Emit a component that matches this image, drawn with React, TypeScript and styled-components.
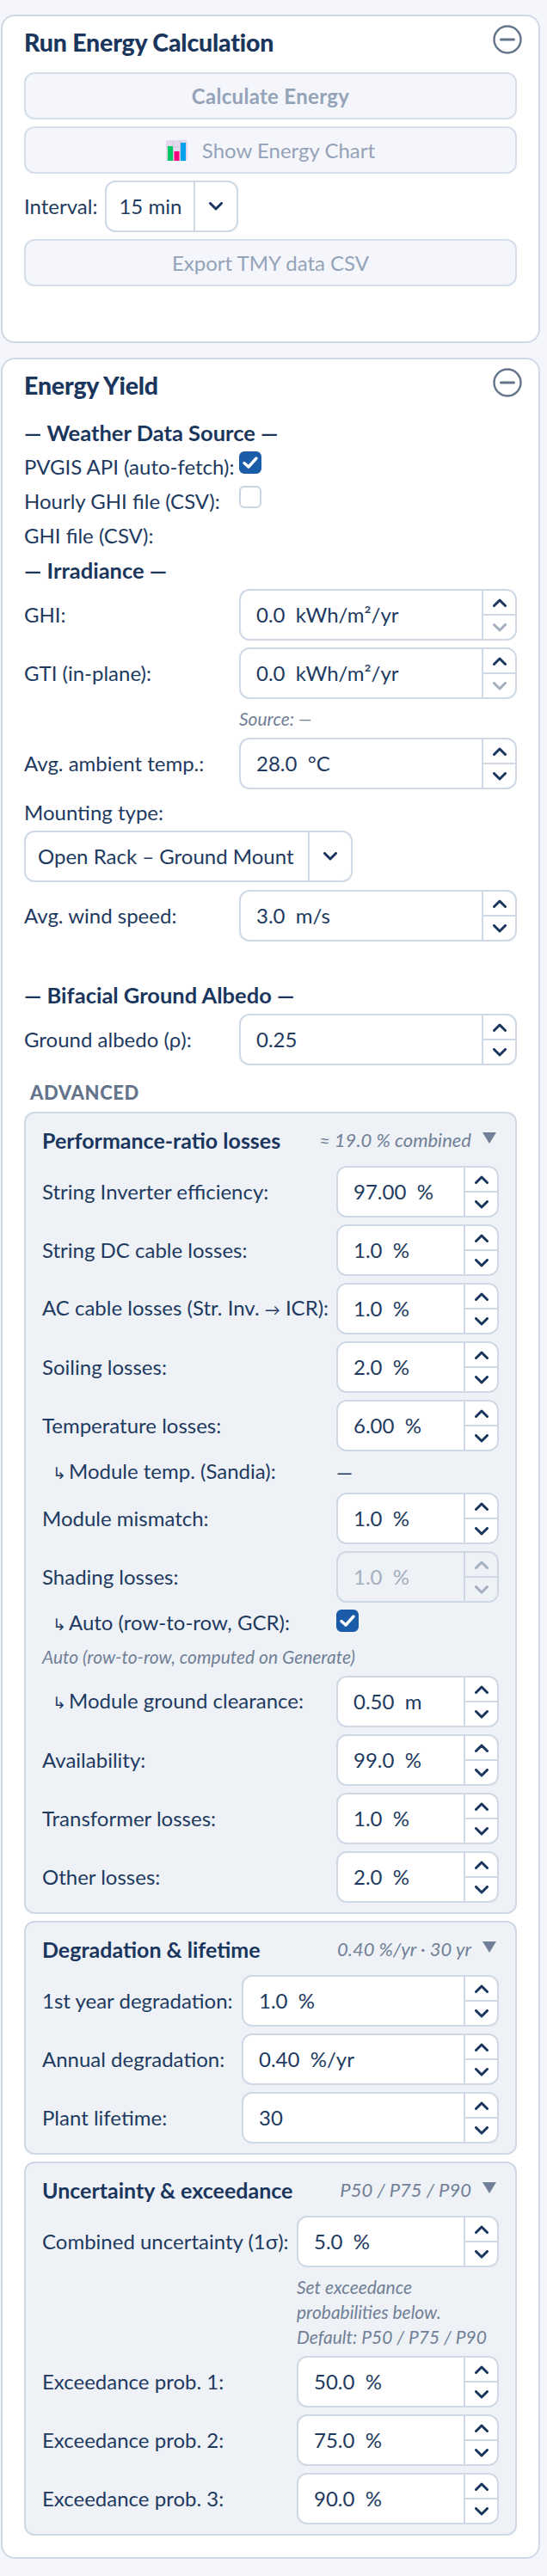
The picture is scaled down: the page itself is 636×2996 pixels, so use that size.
import React from 'react';
import styled, { createGlobalStyle } from 'styled-components';

const GlobalStyle = createGlobalStyle`
    html, body {
        margin: 0;
        padding: 0;
        background: #f4f6fb;
    }
    body {
        font-family: Lato, "Noto Sans", sans-serif;
        color: #1e3a5f;
    }
`;

const Chevron: React.FC<{ up?: boolean; muted?: boolean }> = ({ up, muted }) => (
    <svg width="16" height="10" viewBox="0 0 16 10" fill="none">
        <polyline
            points={up ? '1.5,8.5 8,2 14.5,8.5' : '1.5,1.5 8,8 14.5,1.5'}
            stroke={muted ? '#a3afbf' : '#1a365d'}
            strokeWidth="3"
            strokeLinecap="round"
            strokeLinejoin="round"
        />
    </svg>
);

const CollapseIcon: React.FC = () => (
    <CollapseBtn>
        <svg width="34" height="34" viewBox="0 0 34 34" fill="none">
            <circle cx="17" cy="17" r="15.5" stroke="#64748b" strokeWidth="2.4" />
            <line x1="9.5" y1="17" x2="24.5" y2="17" stroke="#64748b" strokeWidth="3" strokeLinecap="round" />
        </svg>
    </CollapseBtn>
);

const ChartEmoji: React.FC = () => (
    <svg width="25" height="24" viewBox="0 0 25 24">
        <rect x="0" y="0" width="25" height="24" rx="2" fill="#e2d9ec" />
        <path d="M8.5 0V24M16.5 0V24M0 8H25" stroke="#cfc6dc" strokeWidth="1" />
        <rect x="2" y="7" width="6" height="17" fill="#00c864" />
        <rect x="9.5" y="13" width="6" height="11" fill="#f0047f" />
        <rect x="17" y="3" width="6" height="21" fill="#00a2ed" />
    </svg>
);

const CheckMark: React.FC = () => (
    <svg width="20" height="16" viewBox="0 0 20 16" fill="none">
        <polyline points="3,8.5 8,13 17,3" stroke="#fff" strokeWidth="3.4" strokeLinecap="round" strokeLinejoin="round" />
    </svg>
);

const SectionHead: React.FC<{ title: string; meta: string }> = ({ title, meta }) => (
    <SectionHeader>
        <SectionTitle>{title}</SectionTitle>
        <SectionMeta>{meta}</SectionMeta>
        <Triangle viewBox="0 0 16 13"><polygon points="0,0 16,0 8,13" /></Triangle>
    </SectionHeader>
);

type SpinFieldProps = {
    label: React.ReactNode;
    value: string;
    labelWidth: number;
    indent?: boolean;
    disabled?: boolean;
    downMuted?: boolean;
};

const SpinField: React.FC<SpinFieldProps> = ({ label, value, labelWidth, indent, disabled, downMuted }) => (
    <FieldRow $labelWidth={labelWidth}>
        <FieldLabel $indent={indent}>{label}</FieldLabel>
        <SpinBox $disabled={disabled}>
            <SpinValue $disabled={disabled}>{value}</SpinValue>
            <SpinButtons>
                <SpinButton><Chevron up muted={disabled} /></SpinButton>
                <SpinButton><Chevron muted={disabled || downMuted} /></SpinButton>
            </SpinButtons>
        </SpinBox>
    </FieldRow>
);

const SECTION_ONE = 342;
const SECTION_TWO = 232;
const SECTION_THREE = 296;
const MAIN_COL = 250;

const App: React.FC = () => {
    return (
        <Page>
            <GlobalStyle />
            <Card $bottom={64}>
                <CardHeader>
                    <CardTitle>Run Energy Calculation</CardTitle>
                    <CollapseIcon />
                </CardHeader>
                <Stack>
                    <ActionButton $strong>Calculate Energy</ActionButton>
                    <ActionButton><ChartEmoji />Show Energy Chart</ActionButton>
                    <InlineRow>
                        <span>Interval:</span>
                        <Select $width={155}>
                            <SelectValue>15 min</SelectValue>
                            <SelectArrow><Chevron /></SelectArrow>
                        </Select>
                    </InlineRow>
                    <ActionButton>Export TMY data CSV</ActionButton>
                </Stack>
            </Card>

            <Card $bottom={25}>
                <CardHeader>
                    <CardTitle>Energy Yield</CardTitle>
                    <CollapseIcon />
                </CardHeader>

                <GroupHeading>— Weather Data Source —</GroupHeading>
                <CheckRow $labelWidth={MAIN_COL}>
                    <PlainLabel>PVGIS API (auto-fetch):</PlainLabel>
                    <CheckBox $checked><CheckMark /></CheckBox>
                </CheckRow>
                <CheckRow $labelWidth={MAIN_COL}>
                    <PlainLabel>Hourly GHI file (CSV):</PlainLabel>
                    <CheckBox />
                </CheckRow>
                <TextLine>GHI file (CSV):</TextLine>
                <GroupHeading>— Irradiance —</GroupHeading>

                <Stack $top={2}>
                    <SpinField label="GHI:" value="0.0  kWh/m²/yr" labelWidth={MAIN_COL} downMuted />
                    <SpinField label="GTI (in-plane):" value="0.0  kWh/m²/yr" labelWidth={MAIN_COL} downMuted />
                    <NoteRow $labelWidth={MAIN_COL}>
                        <Note>Source: —</Note>
                    </NoteRow>
                    <SpinField label="Avg. ambient temp.:" value="28.0  °C" labelWidth={MAIN_COL} />
                </Stack>
                <TextLine $top={7} $bottom={1}>Mounting type:</TextLine>
                <Select $width={382}>
                    <SelectValue>Open Rack – Ground Mount</SelectValue>
                    <SelectArrow><Chevron /></SelectArrow>
                </Select>
                <Stack $top={9}>
                    <SpinField label="Avg. wind speed:" value="3.0  m/s" labelWidth={MAIN_COL} />
                </Stack>

                <GroupHeading $top={42}>— Bifacial Ground Albedo —</GroupHeading>
                <Stack $top={2}>
                    <SpinField label="Ground albedo (ρ):" value="0.25" labelWidth={MAIN_COL} />
                </Stack>

                <AdvancedLabel>ADVANCED</AdvancedLabel>

                <Stack>
                    <Section>
                        <SectionHead title="Performance-ratio losses" meta="≈ 19.0 % combined" />
                        <Stack>
                            <SpinField label="String Inverter efficiency:" value="97.00  %" labelWidth={SECTION_ONE} />
                            <SpinField label="String DC cable losses:" value="1.0  %" labelWidth={SECTION_ONE} />
                            <SpinField label={<>AC cable losses (Str. Inv. <InlineArrow>→</InlineArrow> ICR):</>} value="1.0  %" labelWidth={SECTION_ONE} />
                            <SpinField label="Soiling losses:" value="2.0  %" labelWidth={SECTION_ONE} />
                            <SpinField label="Temperature losses:" value="6.00  %" labelWidth={SECTION_ONE} />
                            <CheckRow $labelWidth={SECTION_ONE} $height={32}>
                                <FieldLabel $indent><SubArrow>↳</SubArrow>Module temp. (Sandia):</FieldLabel>
                                <span>—</span>
                            </CheckRow>
                            <SpinField label="Module mismatch:" value="1.0  %" labelWidth={SECTION_ONE} />
                            <SpinField label="Shading losses:" value="1.0  %" labelWidth={SECTION_ONE} disabled />
                            <CheckRow $labelWidth={SECTION_ONE} $height={32}>
                                <FieldLabel $indent><SubArrow>↳</SubArrow>Auto (row-to-row, GCR):</FieldLabel>
                                <CheckBox $checked $flush><CheckMark /></CheckBox>
                            </CheckRow>
                            <Note>Auto (row-to-row, computed on Generate)</Note>
                            <SpinField label={<><SubArrow>↳</SubArrow>Module ground clearance:</>} value="0.50  m" labelWidth={SECTION_ONE} indent />
                            <SpinField label="Availability:" value="99.0  %" labelWidth={SECTION_ONE} />
                            <SpinField label="Transformer losses:" value="1.0  %" labelWidth={SECTION_ONE} />
                            <SpinField label="Other losses:" value="2.0  %" labelWidth={SECTION_ONE} />
                        </Stack>
                    </Section>

                    <Section>
                        <SectionHead title="Degradation & lifetime" meta="0.40 %/yr · 30 yr" />
                        <Stack>
                            <SpinField label="1st year degradation:" value="1.0  %" labelWidth={SECTION_TWO} />
                            <SpinField label="Annual degradation:" value="0.40  %/yr" labelWidth={SECTION_TWO} />
                            <SpinField label="Plant lifetime:" value="30" labelWidth={SECTION_TWO} />
                        </Stack>
                    </Section>

                    <Section>
                        <SectionHead title="Uncertainty & exceedance" meta="P50 / P75 / P90" />
                        <Stack>
                            <SpinField label="Combined uncertainty (1σ):" value="5.0  %" labelWidth={SECTION_THREE} />
                            <NoteRow $labelWidth={SECTION_THREE}>
                                <Note>Set exceedance<br />probabilities below.<br />Default: P50 / P75 / P90</Note>
                            </NoteRow>
                            <SpinField label="Exceedance prob. 1:" value="50.0  %" labelWidth={SECTION_THREE} />
                            <SpinField label="Exceedance prob. 2:" value="75.0  %" labelWidth={SECTION_THREE} />
                            <SpinField label="Exceedance prob. 3:" value="90.0  %" labelWidth={SECTION_THREE} />
                        </Stack>
                    </Section>
                </Stack>
            </Card>
        </Page>
    );
};

export default App;

const Page = styled.div`
    width: 636px;
    box-sizing: border-box;
    padding: 17px 8px 20px 1px;
    display: flex;
    flex-direction: column;
    gap: 17px;
    font-size: 24px;
    line-height: 30px;
`;

const Card = styled.div<{ $bottom: number }>`
    box-sizing: border-box;
    background: #fff;
    border: 2px solid #cfd9e6;
    border-radius: 16px;
    padding: 0 25px ${({ $bottom }) => $bottom}px 25px;
`;

const CardHeader = styled.div`
    height: 65px;
    display: flex;
    justify-content: space-between;
    align-items: flex-start;
`;

const CardTitle = styled.div`
    margin-top: 14px;
    font-size: 28.5px;
    line-height: 32px;
    font-weight: 900;
    letter-spacing: -0.2px;
    color: #1a365d;
`;

const CollapseBtn = styled.div`
    width: 34px;
    height: 34px;
    margin: 10px -6px 0 0;
`;

const Stack = styled.div<{ $top?: number }>`
    display: flex;
    flex-direction: column;
    gap: 8px;
    margin-top: ${({ $top }) => $top ?? 0}px;
`;

const ActionButton = styled.div<{ $strong?: boolean }>`
    box-sizing: border-box;
    height: 55px;
    display: flex;
    align-items: center;
    justify-content: center;
    gap: 17px;
    background: #f4f6fb;
    border: 2px solid #d5deea;
    border-radius: 12px;
    color: #94a3b8;
    font-weight: ${({ $strong }) => ($strong ? 700 : 400)};
    letter-spacing: ${({ $strong }) => ($strong ? 0.3 : 0)}px;
`;

const InlineRow = styled.div`
    display: flex;
    align-items: center;
    gap: 9px;
`;

const Select = styled.div<{ $width: number }>`
    box-sizing: border-box;
    width: ${({ $width }) => $width}px;
    height: 60px;
    display: flex;
    background: #fff;
    border: 2px solid #cfd9e6;
    border-radius: 12px;
`;

const SelectValue = styled.div`
    flex: 1;
    display: flex;
    align-items: center;
    padding-left: 14px;
    white-space: nowrap;
`;

const SelectArrow = styled.div`
    width: 48px;
    display: flex;
    align-items: center;
    justify-content: center;
    border-left: 2px solid #cfd9e6;
`;

const GroupHeading = styled.div<{ $top?: number }>`
    height: 40px;
    margin-top: ${({ $top }) => $top ?? 0}px;
    font-size: 25.5px;
    line-height: 40px;
    font-weight: 700;
    color: #1a365d;
`;

const CheckRow = styled.div<{ $labelWidth: number; $height?: number }>`
    height: ${({ $height }) => $height ?? 40}px;
    display: grid;
    grid-template-columns: ${({ $labelWidth }) => $labelWidth}px 1fr;
    align-items: center;
`;

const PlainLabel = styled.span`
    white-space: nowrap;
`;

const CheckBox = styled.div<{ $checked?: boolean; $flush?: boolean }>`
    box-sizing: border-box;
    width: 26px;
    height: 26px;
    align-self: start;
    margin-top: ${({ $flush }) => ($flush ? 0 : 2)}px;
    display: flex;
    align-items: center;
    justify-content: center;
    border-radius: 6px;
    border: 2px solid ${({ $checked }) => ($checked ? '#1a5ca8' : '#cbd5e1')};
    background: ${({ $checked }) => ($checked ? '#1a5ca8' : '#fff')};
`;

const TextLine = styled.div<{ $top?: number; $bottom?: number }>`
    height: 40px;
    line-height: 40px;
    margin: ${({ $top }) => $top ?? 0}px 0 ${({ $bottom }) => $bottom ?? 0}px;
`;

const FieldRow = styled.div<{ $labelWidth: number }>`
    display: grid;
    grid-template-columns: ${({ $labelWidth }) => $labelWidth}px 1fr;
    align-items: center;
`;

const FieldLabel = styled.span<{ $indent?: boolean }>`
    white-space: nowrap;
    margin-left: ${({ $indent }) => ($indent ? 12 : 0)}px;
`;

const SubArrow = styled.span`
    display: inline-block;
    width: 19px;
    font-size: 19px;
`;

const InlineArrow = styled.span`
    font-size: 18px;
`;

const SpinBox = styled.div<{ $disabled?: boolean }>`
    box-sizing: border-box;
    height: 60px;
    display: flex;
    border: 2px solid #cfd9e6;
    border-radius: 12px;
    background: ${({ $disabled }) => ($disabled ? '#eef2f7' : '#fff')};
    overflow: hidden;
`;

const SpinValue = styled.div<{ $disabled?: boolean }>`
    flex: 1;
    display: flex;
    align-items: center;
    padding-left: 18px;
    white-space: pre;
    color: ${({ $disabled }) => ($disabled ? '#a3afbf' : '#1e3a5f')};
`;

const SpinButtons = styled.div`
    width: 37px;
    display: flex;
    flex-direction: column;
    border-left: 2px solid #cfd9e6;
`;

const SpinButton = styled.div`
    flex: 1;
    display: flex;
    align-items: center;
    justify-content: center;
    &:first-child {
        border-bottom: 2px solid #cfd9e6;
    }
`;

const NoteRow = styled.div<{ $labelWidth: number }>`
    padding-left: ${({ $labelWidth }) => $labelWidth}px;
`;

const Note = styled.div`
    font-size: 21px;
    line-height: 29px;
    font-style: italic;
    color: #718096;
    white-space: nowrap;
`;

const AdvancedLabel = styled.div`
    margin: 20px 0 10px 7px;
    font-size: 22px;
    line-height: 24px;
    font-weight: 900;
    letter-spacing: 0.6px;
    color: #64748b;
`;

const Section = styled.div`
    box-sizing: border-box;
    background: #eef2f7;
    border: 2px solid #cfd9e6;
    border-radius: 12px;
    padding: 0 19px 11px 19px;
`;

const SectionHeader = styled.div`
    height: 61px;
    display: flex;
    align-items: center;
`;

const SectionTitle = styled.div`
    flex: 1;
    font-size: 25px;
    font-weight: 700;
    color: #1a365d;
    white-space: nowrap;
`;

const SectionMeta = styled.div`
    font-size: 22px;
    font-style: italic;
    color: #718096;
    white-space: nowrap;
`;

const Triangle = styled.svg`
    width: 16px;
    height: 13px;
    margin: -4px 3px 0 13px;
    fill: #718096;
`;
